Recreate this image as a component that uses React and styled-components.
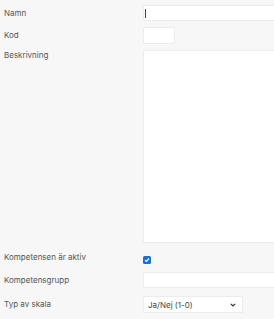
import React from "react";
import styled, { createGlobalStyle } from "styled-components";

const GlobalStyle = createGlobalStyle`
  html, body {
    margin: 0;
    padding: 0;
    background: #f7f7f7;
    overflow: hidden;
  }
  body {
    font-family: Inter, "Noto Sans", sans-serif;
  }
`;

const Form = styled.form`
  display: flex;
  flex-direction: column;
  gap: 6px;
  padding: 5px 0 0 4px;
  width: 320px;
`;

const Row = styled.div`
  display: grid;
  grid-template-columns: 139px 1fr;
  align-items: ${(p) => (p.$top ? "start" : "center")};
  margin-top: ${(p) => p.$push || 0}px;
`;

const Label = styled.label`
  font-size: 8px;
  line-height: 11px;
  color: #555;
`;

const Field = styled.div`
  position: relative;
  height: ${(p) => p.$h || 16}px;
  width: ${(p) => (p.$w ? p.$w + "px" : "100%")};
  background: #ffffff;
  border: 1px solid #ececec;
  box-sizing: border-box;
  border-radius: 1px;
`;

const Caret = styled.span`
  position: absolute;
  left: 1px;
  top: 3px;
  width: 1px;
  height: 9px;
  background: #444;
`;

const CheckCell = styled.div`
  height: 17px;
  display: flex;
  align-items: flex-end;
  padding-bottom: 2px;
  box-sizing: border-box;
`;

const Box = styled.span`
  width: 8px;
  height: 8px;
  border-radius: 1.5px;
  background: #1a6fe0;
  display: flex;
  align-items: center;
  justify-content: center;
`;

const Select = styled.div`
  height: 17px;
  width: 100px;
  background: #fff;
  border: 1px solid #ececec;
  box-sizing: border-box;
  display: flex;
  align-items: center;
  justify-content: space-between;
  padding: 0 6px 0 4px;
  font-size: 8px;
  color: #444;
`;

export default function App() {
  return (
    <>
      <GlobalStyle />
      <Form>
        <Row>
          <Label>Namn</Label>
          <Field>
            <Caret />
          </Field>
        </Row>
        <Row>
          <Label>Kod</Label>
          <Field $h={17} $w={32} />
        </Row>
        <Row $top>
          <Label>Beskrivning</Label>
          <Field $h={193} />
        </Row>
        <Row>
          <Label>Kompetensen är aktiv</Label>
          <CheckCell>
            <Box>
              <svg width="6" height="6" viewBox="0 0 6 6">
                <path d="M1 3.2 L2.4 4.5 L5 1.5" stroke="#fff" strokeWidth="1.2" fill="none" />
              </svg>
            </Box>
          </CheckCell>
        </Row>
        <Row>
          <Label>Kompetensgrupp</Label>
          <Field />
        </Row>
        <Row $push={2}>
          <Label>Typ av skala</Label>
          <Select>
            <span>Ja/Nej (1-0)</span>
            <svg width="6" height="4" viewBox="0 0 6 4">
              <path d="M0.8 0.8 L3 3 L5.2 0.8" stroke="#333" strokeWidth="1.2" fill="none" />
            </svg>
          </Select>
        </Row>
      </Form>
    </>
  );
}
